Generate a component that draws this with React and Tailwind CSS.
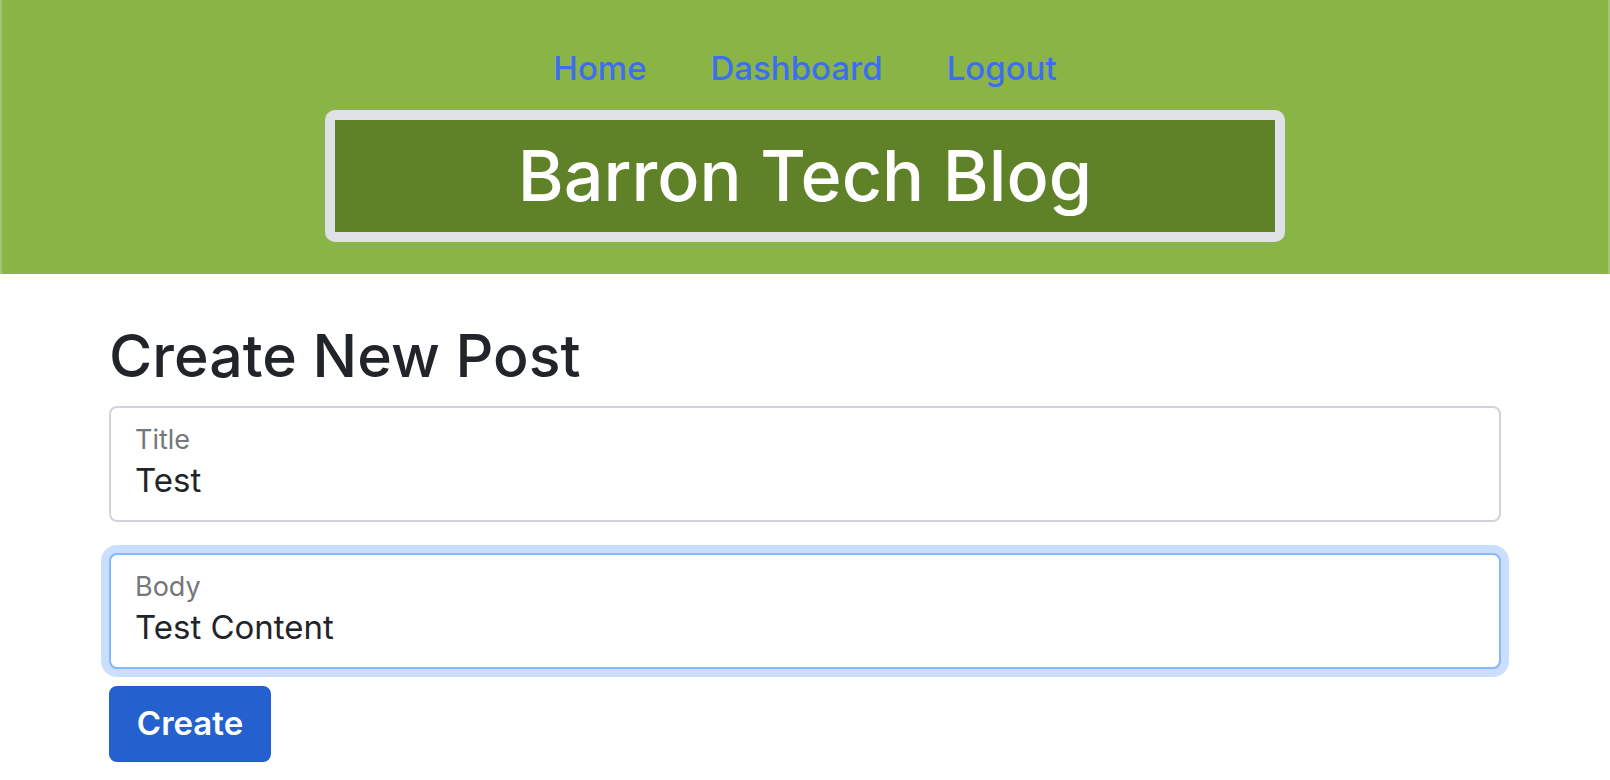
import React from "react";

const navLinks = ["Home", "Dashboard", "Logout"];

// Floating-label style field
const Field = ({ label, value, focused }) => (
  <div
    className={`h-[116px] rounded-lg border-2 bg-white px-6 pt-4 ${
      focused
        ? "border-[#86b7fe] shadow-[0_0_0_8px_rgba(13,110,253,0.22)]"
        : "border-[#d0d4d9]"
    }`}
  >
    <span className="block text-[27px] leading-[32px] text-[#75777a]">{label}</span>
    <input
      readOnly
      value={value}
      className="mt-1 block w-full bg-transparent text-[33px] leading-[40px] text-[#212529] outline-none"
    />
  </div>
);

export default function App() {
  return (
    <div className="min-h-screen bg-white font-['Inter',sans-serif] text-[#212529]">
      {/* Header */}
      <header className="flex h-[274px] flex-col items-center border-x-2 border-[#a3c47a] bg-[#8bb446]">
        <nav className="flex pt-[44px]">
          {navLinks.map((l) => (
            <a key={l} href="#" className="px-8 text-[33px] font-medium leading-[48px] text-[#3b6ff0]">
              {l}
            </a>
          ))}
        </nav>
        <div className="mt-[18px] flex h-[132px] w-[960px] items-center justify-center rounded-[10px] border-[10px] border-[#dee2e6] bg-[#5f8128]">
          <h2 className="text-[70px] font-medium leading-none text-white">Barron Tech Blog</h2>
        </div>
      </header>

      {/* Form */}
      <main className="mx-auto w-[1392px] pt-[41px]">
        <h1 className="mb-[9px] text-[59px] font-medium leading-[82px]">Create New Post</h1>
        <form className="flex flex-col">
          <Field label="Title" value="Test" />
          <div className="mt-[31px]">
            <Field label="Body" value="Test Content" focused />
          </div>
          <button
            type="button"
            className="mt-[17px] h-[76px] w-[162px] rounded-lg border-2 border-[#2461cf] bg-[#2461cf] text-[33px] font-semibold text-white"
          >
            Create
          </button>
        </form>
      </main>
    </div>
  );
}
